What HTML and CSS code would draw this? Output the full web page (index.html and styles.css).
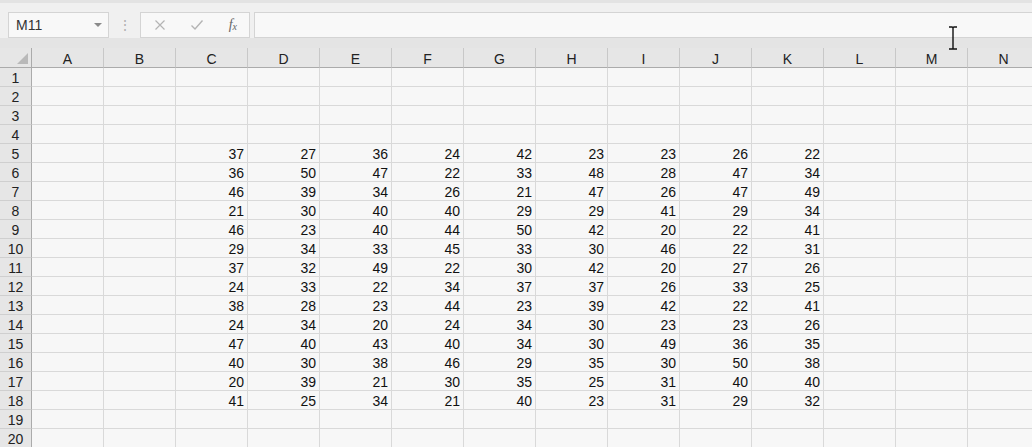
FILE: index.html
```html
<!DOCTYPE html>
<html lang="en">
<head>
<meta charset="UTF-8">
<title>Sheet</title>
<link rel="stylesheet" href="styles.css">
</head>
<body>
<div class="toolbar">
<div class="namebox">
<span class="ref">M11</span>
<span class="drop"></span>
</div>
<div class="grip">&#8942;</div>
<div class="fbuttons">
<svg class="ico" width="12" height="12" viewBox="0 0 12 12"><path d="M1.5 1.5 L10.5 10.5 M10.5 1.5 L1.5 10.5" stroke="#b4b4b4" stroke-width="1.2" fill="none"/></svg>
<svg class="ico" width="14" height="12" viewBox="0 0 14 12"><path d="M1.5 6.5 L5 10 L12.5 1.5" stroke="#b4b4b4" stroke-width="1.4" fill="none"/></svg>
<span class="fx">f<span class="x">x</span></span>
</div>
<div class="finput"></div>
</div>
<div class="band"></div>
<div class="sheet" id="sheet"></div>
<svg class="cursor" width="12" height="24" viewBox="0 0 12 24"><path d="M2 1 H5 M7 1 H10 M6 1.5 V22.5 M2 23 H5 M7 23 H10 M5 1 Q6 1 6 2 M7 1 Q6 1 6 2 M5 23 Q6 23 6 22 M7 23 Q6 23 6 22" stroke="#111" stroke-width="1.4" fill="none"/></svg>
<script>
const sheet = document.getElementById('sheet');
const cols = ['A','B','C','D','E','F','G','H','I','J','K','L','M','N'];
// rows 5 to 18, columns C to K
const data = [
[37,27,36,24,42,23,23,26,22],
[36,50,47,22,33,48,28,47,34],
[46,39,34,26,21,47,26,47,49],
[21,30,40,40,29,29,41,29,34],
[46,23,40,44,50,42,20,22,41],
[29,34,33,45,33,30,46,22,31],
[37,32,49,22,30,42,20,27,26],
[24,33,22,34,37,37,26,33,25],
[38,28,23,44,23,39,42,22,41],
[24,34,20,24,34,30,23,23,26],
[47,40,43,40,34,30,49,36,35],
[40,30,38,46,29,35,30,50,38],
[20,39,21,30,35,25,31,40,40],
[41,25,34,21,40,23,31,29,32]
];
let html = '<div class="corner"><span class="tri"></span></div>';
cols.forEach(c => { html += '<div class="colhead">' + c + '</div>'; });
for (let r = 1; r <= 20; r++) {
html += '<div class="rowhead">' + r + '</div>';
for (let c = 0; c < cols.length; c++) {
let v = '';
if (r >= 5 && r <= 18 && c >= 2 && c <= 10) {
v = data[r - 5][c - 2];
}
html += '<div class="cell">' + v + '</div>';
}
}
sheet.innerHTML = html;
</script>
</body>
</html>
```
FILE: styles.css
```css
body {
margin: 0;
width: 1032px;
height: 447px;
overflow: hidden;
background-color: #f7f7f7;
font-family: "Liberation Sans", Arial, sans-serif;
color: #222;
position: relative;
}
.toolbar {
height: 38px;
box-sizing: border-box;
padding: 12px 0 0 8px;
display: flex;
background-color: #f0f0f0;
border-top: 3px solid #e3e3e3;
}
.namebox {
width: 101px;
height: 26px;
box-sizing: border-box;
margin-top: -3px;
border: 1px solid #d4d4d4;
background-color: #f8f8f8;
display: flex;
align-items: center;
justify-content: space-between;
padding: 0 6px 0 7px;
font-size: 14px;
color: #333;
}
.drop {
width: 0;
height: 0;
border-left: 4px solid transparent;
border-right: 4px solid transparent;
border-top: 4px solid #8a8a8a;
}
.grip {
width: 31px;
margin-top: -3px;
text-align: center;
line-height: 26px;
color: #b0b0b0;
font-size: 14px;
}
.fbuttons {
width: 110px;
height: 26px;
box-sizing: border-box;
margin-top: -3px;
border: 1px solid #d4d4d4;
background-color: #f8f8f8;
display: flex;
align-items: center;
justify-content: space-between;
padding: 0 12px 0 13px;
}
.fx {
font-family: "Liberation Serif", serif;
font-style: italic;
font-size: 14px;
color: #666;
}
.fx .x {
font-size: 10px;
position: relative;
top: 1px;
}
.finput {
flex: 1;
height: 26px;
box-sizing: border-box;
margin: -3px -2px 0 4px;
border: 1px solid #d4d4d4;
background-color: #f8f8f8;
}
.band {
height: 10px;
background-color: #e4e4e4;
}
.sheet {
display: grid;
grid-template-columns: 32px repeat(13, 72px) 72px;
grid-auto-rows: 19px;
grid-template-rows: 20px;
}
.corner, .colhead, .rowhead, .cell {
box-sizing: border-box;
border-right: 1px solid #d9d9d9;
border-bottom: 1px solid #d9d9d9;
font-size: 14px;
}
.corner, .colhead {
background-color: #e6e6e6;
border-bottom-color: #ababab;
border-right-color: #c8c8c8;
}
.corner {
border-right-color: #ababab;
position: relative;
}
.tri {
position: absolute;
right: 3px;
bottom: 3px;
width: 0;
height: 0;
border-left: 11px solid transparent;
border-bottom: 11px solid #b9b9b9;
}
.colhead {
text-align: center;
line-height: 22px;
}
.rowhead {
background-color: #e6e6e6;
border-right-color: #ababab;
border-bottom-color: #cfcfcf;
text-align: center;
line-height: 21px;
}
.cell {
background-color: #f7f7f7;
text-align: right;
padding-right: 3px;
line-height: 21px;
color: #111;
}
.cursor {
position: absolute;
left: 947px;
top: 26px;
}
```
